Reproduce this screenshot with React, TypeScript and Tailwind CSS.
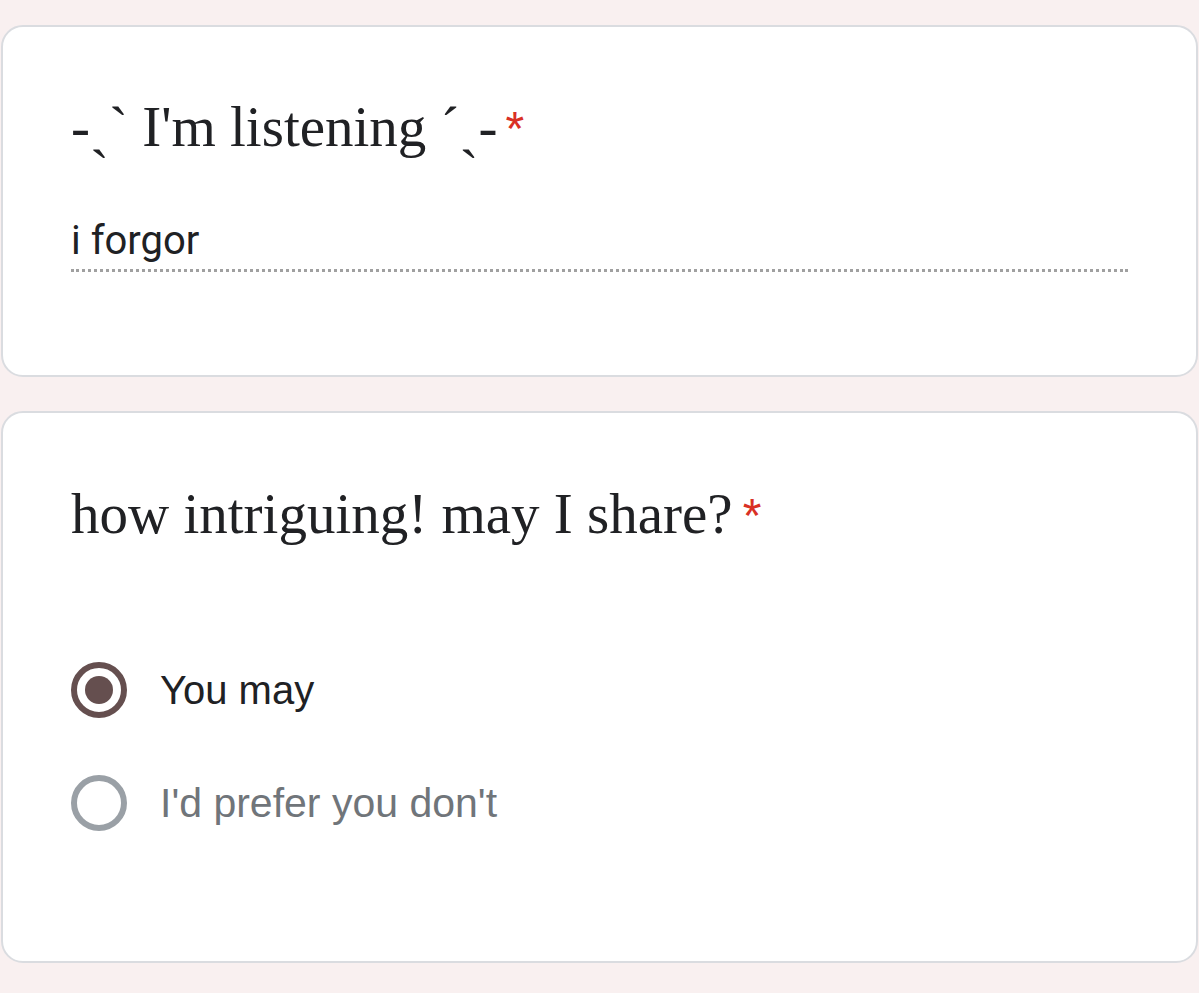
export default function App() {
  return (
    <div className="min-h-[993px] bg-[#f9f0f0] px-px pt-[25px]">
      <div className="flex h-[352px] flex-col rounded-[22px] border-2 border-[#dadce0] bg-white pl-[68px] pr-[68px] pt-[70px]">
        <h2 className="flex items-start text-[57px] leading-[60px] text-[#202124] [font-family:'Liberation_Serif',serif]">
          <span>-ˏˋ I'm listening ˊˎ-</span>
          <span className="ml-[8px] mt-[8px] text-[48px] leading-[48px] text-[#d93025] [font-family:'Liberation_Sans',sans-serif]">*</span>
        </h2>
        <div className="mt-[62px] border-b-[3px] border-dotted border-[#a0a0a0] pb-[6px] text-[40px] leading-[44px] text-[#202124] [font-family:Roboto,sans-serif]">
          i forgor
        </div>
      </div>

      <div className="mt-[34px] flex h-[552px] flex-col rounded-[22px] border-2 border-[#dadce0] bg-white pl-[68px] pt-[71px]">
        <h2 className="flex items-start text-[57px] leading-[60px] text-[#202124] [font-family:'Liberation_Serif',serif]">
          <span>how intriguing! may I share?</span>
          <span className="ml-[10px] mt-[8px] text-[48px] leading-[48px] text-[#d93025] [font-family:'Liberation_Sans',sans-serif]">*</span>
        </h2>
        <div className="mt-[118px] flex flex-col gap-[57px]">
          <label className="flex items-center gap-[33px]">
            <span className="flex h-[56px] w-[56px] items-center justify-center rounded-full border-[6px] border-[#654f4f]">
              <span className="h-[28px] w-[28px] rounded-full bg-[#654f4f]" />
            </span>
            <span className="text-[40px] leading-[44px] text-[#202124] [font-family:'Liberation_Sans',sans-serif]">You may</span>
          </label>
          <label className="flex items-center gap-[33px]">
            <span className="h-[56px] w-[56px] rounded-full border-[6px] border-[#9aa0a6]" />
            <span className="text-[41px] leading-[44px] text-[#70757a] [font-family:'Liberation_Sans',sans-serif]">I'd prefer you don't</span>
          </label>
        </div>
      </div>
    </div>
  );
}
